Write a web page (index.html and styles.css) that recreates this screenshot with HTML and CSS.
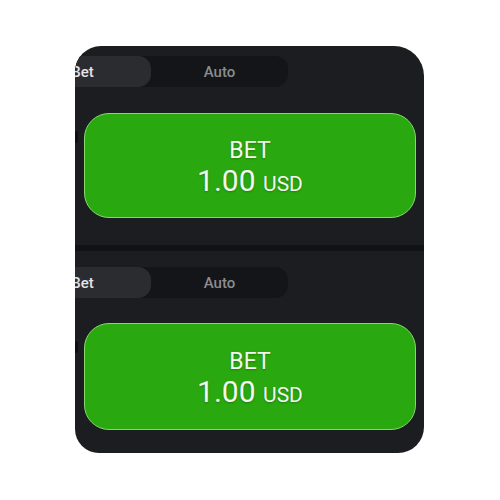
FILE: index.html
```html
<!DOCTYPE html>
<html lang="en">

<head>
    <meta charset="UTF-8">
    <title>Bet panel</title>
    <link rel="stylesheet" href="styles.css">
</head>

<body>
    <main class="panel">
        <section class="bet-box first">
            <div class="tabs">
                <button class="tab active">Bet</button>
                <button class="tab">Auto</button>
            </div>
            <div class="row">
                <span class="nub"></span>
                <button class="bet-btn">
                    <span class="label">BET</span>
                    <span class="amount">1.00 <small>USD</small></span>
                </button>
            </div>
        </section>

        <div class="divider"></div>

        <section class="bet-box second">
            <div class="tabs">
                <button class="tab active">Bet</button>
                <button class="tab">Auto</button>
            </div>
            <div class="row">
                <span class="nub"></span>
                <button class="bet-btn">
                    <span class="label">BET</span>
                    <span class="amount">1.00 <small>USD</small></span>
                </button>
            </div>
        </section>
    </main>
</body>

</html>
```

FILE: styles.css
```css
* {
    margin: 0;
    padding: 0;
    box-sizing: border-box;
}

body {
    width: 500px;
    height: 500px;
    background-color: #fff;
    font-family: Roboto, "Liberation Sans", sans-serif;
    padding: 46px 0 0 75px;
}

.panel {
    width: 349px;
    height: 407px;
    background-color: #1c1d20;
    border-radius: 26px 30px 26px 24px;
    overflow: hidden;

    display: flex;
    flex-direction: column;
}

.bet-box {
    padding: 10px 8px 0 0;
}

.bet-box.first {
    height: 199px;
}

.bet-box.second {
    height: 202px;
    padding-top: 16px;
}

.divider {
    height: 6px;
    background-color: #111214;
}

.tabs {
    width: 274px;
    height: 31px;
    margin-left: -61px;
    background-color: #141518;
    border-radius: 13px;

    display: grid;
    grid-template-columns: 1fr 1fr;
}

.tab {
    border: none;
    background: none;
    border-radius: 13px;
    font: 500 15px Roboto, "Liberation Sans", sans-serif;
    color: #8a8c90;
}

.tab.active {
    background-color: #2b2c30;
    color: #e4e4e6;
}

.row {
    position: relative;
    margin-top: 26px;
    padding-left: 9px;
}

.second .row {
    margin-top: 25px;
}

.nub {
    position: absolute;
    left: -2px;
    top: 18px;
    width: 5px;
    height: 12px;
    border-radius: 3px;
    background-color: #0e0f10;
}

.bet-btn {
    width: 332px;
    height: 105px;
    padding-top: 7px;
    border: 1px solid #84d86e;
    border-radius: 25px;
    background-color: #2aa80f;
    color: #f2f7ef;
    text-shadow: 0 1px 2px rgba(0, 0, 0, .25);

    display: flex;
    flex-direction: column;
    align-items: center;
    justify-content: center;
    font-family: Roboto, "Liberation Sans", sans-serif;
}

.second .bet-btn {
    height: 107px;
}

.bet-btn .label {
    font-size: 23px;
    line-height: 26px;
}

.bet-btn .amount {
    font-size: 30px;
    line-height: 34px;
}

.bet-btn .amount small {
    font-size: 21px;
}
```
